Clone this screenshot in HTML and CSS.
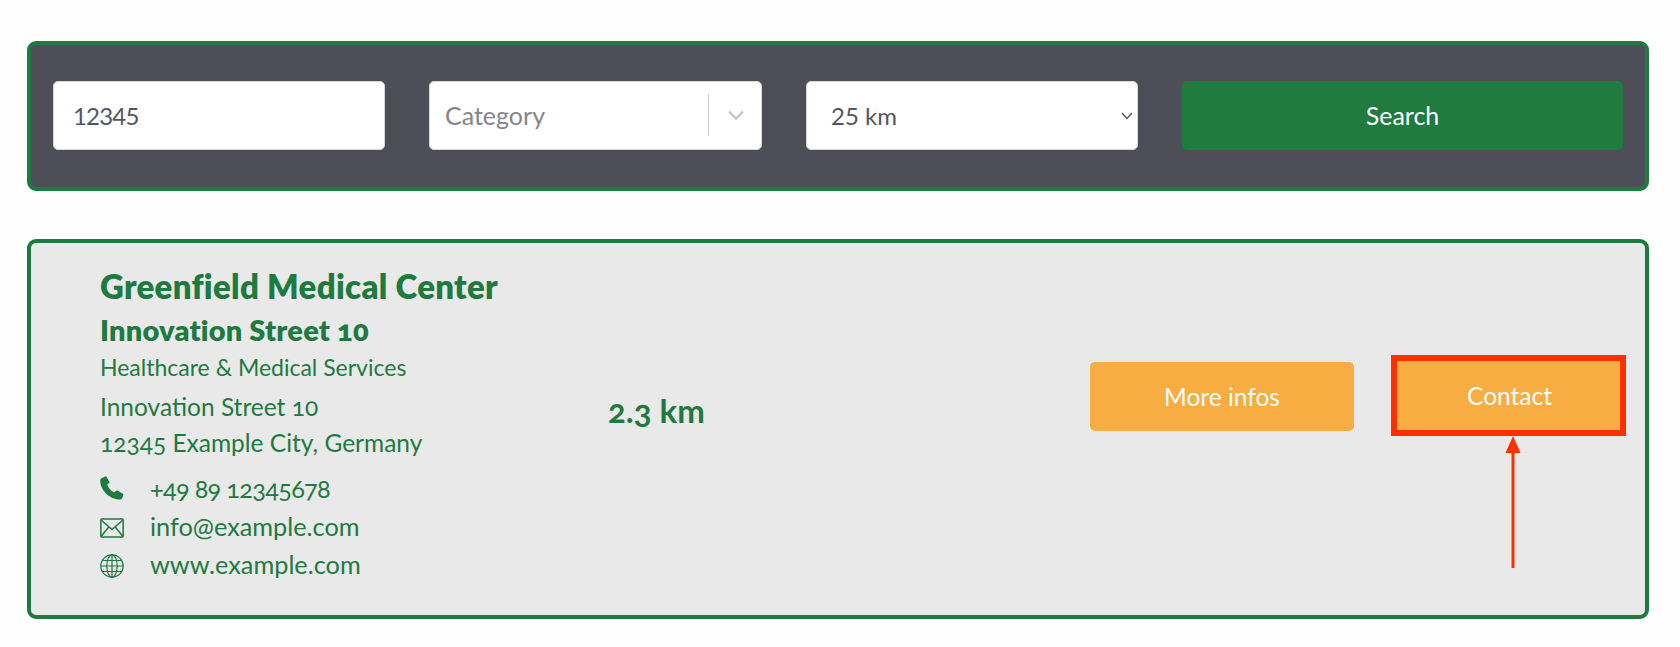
FILE: index.html
```html
<!DOCTYPE html>
<html lang="en">
<head>
    <meta charset="UTF-8">
    <meta name="viewport" content="width=device-width, initial-scale=1.0">
    <title>Practice Search</title>
    <link rel="stylesheet" href="styles.css">
</head>
<body>
    <form class="search-panel">
        <input class="field zip" type="text" value="12345">
        <div class="field category">
            <span class="category-label">Category</span>
            <span class="category-sep"></span>
            <svg class="category-arrow" viewBox="0 0 20 20" width="20" height="20"><path d="M3 6.500l7 7 7-7" fill="none" stroke="#c4c4c4" stroke-width="2.400"/></svg>
        </div>
        <div class="radius-wrap">
            <select class="field radius">
                <option>25 km</option>
            </select>
            <svg class="radius-arrow" viewBox="0 0 12 8" width="12" height="8"><path d="M1 1l5 5.500L11 1" fill="none" stroke="#55565f" stroke-width="1.400"/></svg>
        </div>
        <button class="search-btn" type="button">Search</button>
    </form>

    <div class="result-card">
        <div class="info">
            <h2 class="name">Greenfield Medical Center</h2>
            <h3 class="street">Innovation Street 10</h3>
            <p class="branch">Healthcare &amp; Medical Services</p>
            <p class="address">Innovation Street 10</p>
            <p class="address">12345 Example City, Germany</p>
            <ul class="contact-list">
                <li>
                    <svg viewBox="0 0 24 24" width="24" height="24"><path d="M1.500 2.200 5.200.4c.6-.3 1.100-.1 1.400.4l2.700 5c.3.5.2 1-.2 1.400L7.200 8.500c.9 3.200 3.500 6.300 6.800 8l2.200-1.800c.4-.3.900-.4 1.400-.1l5.200 3.100c.5.300.7.800.5 1.300l-1.200 3.200c-.3.800-1 1.300-1.900 1.300C9.500 23.800-.4 13.500.3 4c.1-.8.500-1.400 1.200-1.800z" fill="#1f7a3f"/></svg>
                    <span class="phone">+49 89 12345678</span>
                </li>
                <li>
                    <svg class="low-icon" viewBox="0 0 24 20" width="24" height="20"><g fill="none" stroke="#1f7a3f" stroke-width="1.500"><rect x=".8" y="1" width="22.400" height="18" rx="1"/><path d="M1 2l11 9.500L23 2M1 18.500l7.800-9.500M23 18.500l-7.800-9.500"/></g></svg>
                    <span>info@example.com</span>
                </li>
                <li>
                    <svg class="low-icon" viewBox="0 0 24 24" width="24" height="24"><g fill="none" stroke="#1f7a3f" stroke-width="1.200"><circle cx="12" cy="12" r="11.200"/><ellipse cx="12" cy="12" rx="5.200" ry="11.200"/><path d="M12 .8v22.400M.8 12h22.400M2.500 6.500h19M2.500 17.500h19"/></g></svg>
                    <span>www.example.com</span>
                </li>
            </ul>
        </div>
        <div class="distance">2.3 km</div>
        <div class="actions">
            <button class="action-btn more" type="button">More infos</button>
            <div class="highlight">
                <button class="action-btn" type="button">Contact</button>
                <svg class="arrow" viewBox="0 0 16 132" width="16" height="132"><path d="M8 0l7.500 17H9.500v115h-3V17H.5z" fill="#ff3000"/></svg>
            </div>
        </div>
    </div>
</body>
</html>
```

FILE: styles.css
```css
* {
    box-sizing: border-box;
}
body {
    margin: 0;
    padding: 41px 31px 0 27px;
    background-color: #fefefe;
    font-family: Lato, "Open Sans", sans-serif;
    font-variant-numeric: oldstyle-nums;
    color: #1f7a3f;
}
.search-panel {
    display: grid;
    grid-template-columns: 332px 333px 332px 441px;
    column-gap: 44px;
    align-items: center;
    height: 150px;
    padding: 0 22px 2px;
    background-color: #4d4e58;
    border: 4px solid #1f7a3f;
    border-radius: 9px;
}
.field {
    height: 69px;
    background-color: white;
    border: 1px solid #d6d6dc;
    border-radius: 5px;
    font-family: inherit;
    font-size: 25px;
    color: #55565f;
}
.zip {
    padding: 0 0 0 19px;
    font-size: 24px;
    letter-spacing: -0.8px;
}
.category {
    display: flex;
    align-items: center;
    padding-left: 15px;
}
.category-label {
    flex: 1;
    color: #85858b;
}
.category-sep {
    width: 1px;
    height: 42px;
    background-color: #cfcfcf;
}
.category-arrow {
    margin: 0 15px 0 17px;
}
.radius-wrap {
    position: relative;
}
.radius {
    display: block;
    width: 100%;
    padding-left: 24px;
    appearance: none;
    font-size: 24px;
}
.radius-arrow {
    position: absolute;
    right: 5px;
    top: 31px;
    pointer-events: none;
}
.search-btn {
    height: 69px;
    background-color: #217a3e;
    border: none;
    border-radius: 5px;
    font-family: inherit;
    font-size: 25px;
    color: white;
}
.result-card {
    display: flex;
    align-items: flex-start;
    height: 380px;
    margin-top: 48px;
    padding: 23px 19px 0 69px;
    background-color: #e9e9e9;
    border: 4px solid #1f7a3f;
    border-radius: 9px;
}
.info {
    width: 508px;
}
.name {
    margin: 0 0 7px;
    font-size: 33px;
    font-weight: 800;
    letter-spacing: 0.3px;
    line-height: 40px;
}
.street {
    margin: 0 0 6px;
    font-size: 29px;
    font-weight: 800;
    letter-spacing: 0.2px;
    line-height: 34px;
}
.branch {
    margin: 0 0 11px;
    font-size: 23px;
    line-height: 28px;
}
.address {
    margin: 0 0 6px;
    font-size: 24.500px;
    line-height: 30px;
}
.contact-list {
    list-style: none;
    margin: 11px 0 0;
    padding: 0;
    font-size: 25.300px;
}
.contact-list li {
    display: flex;
    align-items: center;
    gap: 26px;
    height: 38px;
}
.contact-list svg {
    flex: none;
}
.contact-list .low-icon {
    margin-top: 4px;
}
.phone {
    letter-spacing: -0.7px;
}
.distance {
    margin-top: 124px;
    font-size: 33px;
    font-weight: bold;
    line-height: 40px;
}
.actions {
    display: flex;
    align-items: flex-start;
    gap: 37px;
    margin: 89px 0 0 auto;
}
.action-btn {
    width: 264px;
    height: 69px;
    background-color: #f7ad42;
    border: none;
    border-radius: 5px;
    font-family: inherit;
    font-size: 24.500px;
    color: white;
}
.more {
    margin-top: 7px;
}
.highlight {
    position: relative;
    border: 6px solid #ff3000;
}
.highlight .action-btn {
    display: block;
    width: 223px;
    padding-left: 8px;
    border-radius: 0;
}
.arrow {
    position: absolute;
    left: 108px;
    top: 100%;
    margin-top: 6px;
}
```
